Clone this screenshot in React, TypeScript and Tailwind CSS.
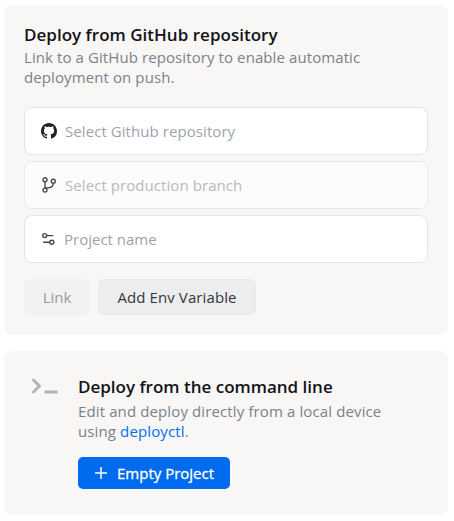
import type { ReactNode } from "react";

function GithubIcon() {
  return (
    <svg width="16" height="16" viewBox="0 0 16 16" fill="#1f2328">
      <path d="M8 0C3.58 0 0 3.58 0 8c0 3.54 2.29 6.53 5.47 7.59.4.07.55-.17.55-.38 0-.19-.01-.82-.01-1.49-2.01.37-2.53-.49-2.69-.94-.09-.23-.48-.94-.82-1.13-.28-.15-.68-.52-.01-.53.63-.01 1.08.58 1.23.82.72 1.21 1.87.87 2.33.66.07-.52.28-.87.51-1.07-1.78-.2-3.64-.89-3.64-3.95 0-.87.31-1.59.82-2.15-.08-.2-.36-1.02.08-2.12 0 0 .67-.21 2.2.82.64-.18 1.32-.27 2-.27s1.36.09 2 .27c1.53-1.04 2.2-.82 2.2-.82.44 1.1.16 1.92.08 2.12.51.56.82 1.27.82 2.15 0 3.07-1.87 3.75-3.65 3.95.29.25.54.73.54 1.48 0 1.07-.01 1.93-.01 2.2 0 .21.15.46.55.38A8.01 8.01 0 0 0 16 8c0-4.42-3.58-8-8-8z" />
    </svg>
  );
}

function BranchIcon() {
  return (
    <svg width="16" height="16" viewBox="0 0 16 16" fill="none" stroke="#484c53" strokeWidth="1.4">
      <circle cx="4" cy="2.8" r="2" />
      <circle cx="4" cy="13.1" r="2" />
      <circle cx="12.3" cy="4.3" r="2" />
      <path d="M4 4.8v6.3M12.3 6.3c0 3.3-2.4 4.3-4.9 4.4-2 .1-3.1.5-3.4 1.3" />
    </svg>
  );
}

function SlidersIcon() {
  return (
    <svg width="16" height="16" viewBox="0 0 16 16" fill="none" stroke="#42464d" strokeWidth="1.4">
      <circle cx="3.7" cy="4.6" r="2" />
      <circle cx="10.8" cy="11.2" r="2" />
      <path d="M5.7 4.6H12.3M2.2 11.2h6.6" />
    </svg>
  );
}

function Field({ icon, children, disabled }: { icon: ReactNode; children: ReactNode; disabled?: boolean }) {
  return (
    <div
      className={`flex h-12 items-center gap-2 rounded-lg border px-4 tracking-[0.07px] ${
        disabled ? "border-[#e9e9eb] bg-[#fcfcfc] text-[#b7bac1]" : "border-[#e4e5e8] bg-white text-[#9ca3af]"
      }`}
    >
      {icon}
      {children}
    </div>
  );
}

export default function App() {
  return (
    <main className="flex h-[521px] w-[454px] flex-col gap-4 bg-white pt-[5px] pr-1.5 pl-1 font-['Open_Sans','Noto_Sans',sans-serif] text-[15px] leading-5">
      <section className="h-[330px] rounded-lg bg-[#f8f7f5] p-5">
        <h2 className="-mt-0.5 mb-px text-[17px] font-semibold leading-[23px] tracking-[0.02px] text-[#111318]">
          <span>Deploy from GitHub repository</span>
        </h2>
        <p className="text-[#7c818b]">
          <span className="tracking-[0.09px]">Link to a GitHub repository to enable automatic</span>
          <br />
          <span className="tracking-[0.1px]">deployment on push.</span>
        </p>
        <div className="mt-5 flex flex-col gap-1.5">
          <Field icon={<GithubIcon />}>
            <span>Select Github repository</span>
          </Field>
          <Field icon={<BranchIcon />} disabled>
            <span>Select production branch</span>
          </Field>
          <Field icon={<SlidersIcon />}>
            <span className="-ml-px tracking-normal">Project name</span>
          </Field>
        </div>
        <div className="mt-4 flex gap-2">
          <button className="h-9 w-[66px] rounded-md bg-[#f1f1f1] text-[#979a9f]" disabled>
            <span>Link</span>
          </button>
          <button className="h-9 w-[158px] rounded-md border border-[#e8eaec] bg-[#ebedef] text-[#34373c]">
            <span className="tracking-[0.1px]">Add Env Variable</span>
          </button>
        </div>
      </section>

      <section className="flex h-[164px] rounded-lg bg-[#f8f7f5] pt-6 pl-[26px]">
        <svg className="shrink-0" width="30" height="22" viewBox="0 0 30 22" fill="none" stroke="#b1b4bb" strokeWidth="3" strokeLinecap="round" strokeLinejoin="round">
          <path d="M3.5 5 9.5 11l-6 6M15.7 17h10.8" />
        </svg>
        <div className="ml-[18px]">
          <h2 className="-mt-px mb-px text-[17px] font-semibold leading-[26px] text-[#111318]">
            <span>Deploy from the command line</span>
          </h2>
          <p className="tracking-[0.12px] text-[#7c818b]">
            <span>Edit and deploy directly from a local device</span>
            <br />
            <span>
              using <a className="text-[#006fee]">deployctl</a>.
            </span>
          </p>
          <button className="mt-4 flex h-8 w-[152px] items-center rounded-[5px] bg-[#006bef] pl-4 text-white">
            <svg width="14" height="14" viewBox="0 0 14 14" stroke="white" strokeWidth="1.5">
              <path d="M1 7h12M7 1v12" />
            </svg>
            <span className="ml-[9px] [-webkit-text-stroke:0.3px_white]">Empty Project</span>
          </button>
        </div>
      </section>
    </main>
  );
}
